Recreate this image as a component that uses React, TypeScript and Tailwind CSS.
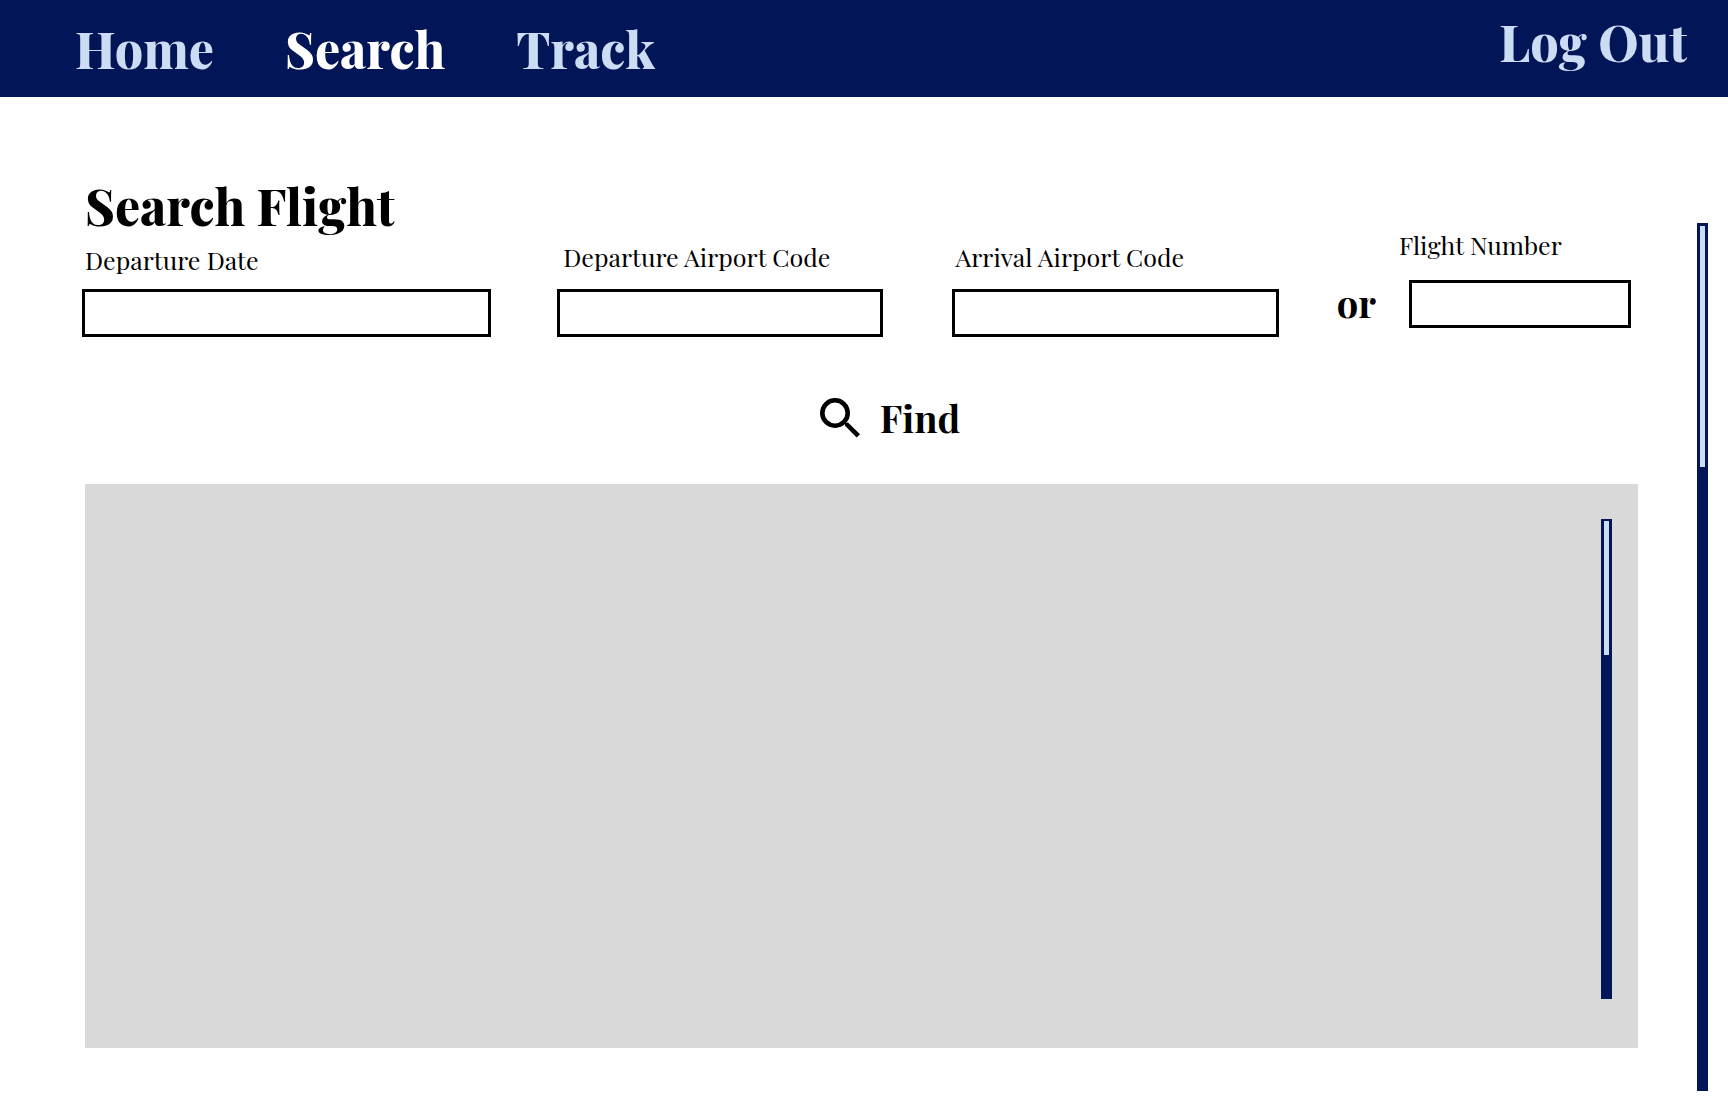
import React from 'react';

function NavLink({ label, active = false }: { label: string; active?: boolean }) {
  return (
    <a href="#" aria-current={active ? 'page' : undefined} className={active ? 'text-white' : 'text-[#cbdcf4]'}>
      {label}
    </a>
  );
}

function TextField({ id, label, labelClass, inputClass = '' }: { id: string; label: string; labelClass: string; inputClass?: string }) {
  return (
    <>
      <label htmlFor={id} className={`block whitespace-nowrap text-[25px] leading-8 ${labelClass}`}>
        {label}
      </label>
      <div className={inputClass}>
        <input id={id} type="text" className="block h-12 w-full border-3 border-black bg-white px-3 text-2xl outline-none" />
      </div>
    </>
  );
}

function SearchIcon() {
  return (
    <svg width="40" height="40" viewBox="0 0 40 40" aria-hidden="true">
      <circle cx="15" cy="15" r="12.7" fill="none" stroke="black" strokeWidth="4.6" />
      <path d="M25 27.5L25 25L28 24.5L40 36.3L36.7 39.6L25 27.8Z" />
    </svg>
  );
}

export default function App() {
  return (
    <div className="flex min-h-screen flex-col bg-white font-['Playfair_Display','Liberation_Serif',serif] text-black">
      <header className="flex items-start justify-between bg-[#021557] pr-[41px] pl-[75px] text-[50px] leading-14 font-extrabold">
        <nav className="flex gap-[71px] pt-[21px] pb-5">
          <NavLink label="Home" />
          <NavLink label="Search" active />
          <NavLink label="Track" />
        </nav>
        <button type="button" className="pt-3.5">
          <span className="text-[#cbdcf4]">Log Out</span>
        </button>
      </header>

      <div className="flex flex-1 pr-5 pl-[82px]">
        <main className="flex min-w-0 flex-1 flex-col pt-[81px] pb-[69px]">
          <form className="flex flex-col" onSubmit={(e) => e.preventDefault()}>
            <div className="flex items-end pr-[7px]">
              <div className="mr-[66px] min-w-0 flex-[409]">
                <h1 className="mb-2.5 pl-[3px] text-[50px] leading-14 font-extrabold whitespace-nowrap">Search Flight</h1>
                <TextField id="departure-date" label="Departure Date" labelClass="mb-[13px] pl-[3px]" />
              </div>
              <div className="mr-[69px] min-w-0 flex-[326]">
                <TextField id="departure-code" label="Departure Airport Code" labelClass="mb-4 pl-1.5" />
              </div>
              <div className="mr-[58px] min-w-0 flex-[326]">
                <TextField id="arrival-code" label="Arrival Airport Code" labelClass="mb-4 pl-[3px]" />
              </div>
              <span className="mr-[23px] pb-2.5 text-[38px] leading-12 font-bold">or</span>
              <div className="min-w-0 flex-[232] pb-[9px]">
                <TextField id="flight-number" label="Flight Number" labelClass="mb-[19px]" inputClass="pl-2.5" />
              </div>
            </div>
            <button type="submit" className="mt-[57px] ml-[60px] flex items-center gap-5 self-center text-[38px] leading-12 font-bold">
              <SearchIcon />
              Find
            </button>
          </form>

          <section aria-label="Results" className="mt-[42px] ml-[3px] flex min-h-60 flex-1 justify-end bg-[#d9d9d9] pt-[35px] pr-[26px] pb-[49px]">
            <div className="w-[11px] bg-[#021557] px-[3px] pt-0.5">
              <div className="h-[28%] bg-[#cbdcf4]" />
            </div>
          </section>
        </main>

        <div className="mt-[126px] mb-[26px] ml-[59px] w-[11px] shrink-0 bg-[#021557] p-[3px]">
          <div className="h-[28%] bg-[#cbdcf4]" />
        </div>
      </div>
    </div>
  );
}
